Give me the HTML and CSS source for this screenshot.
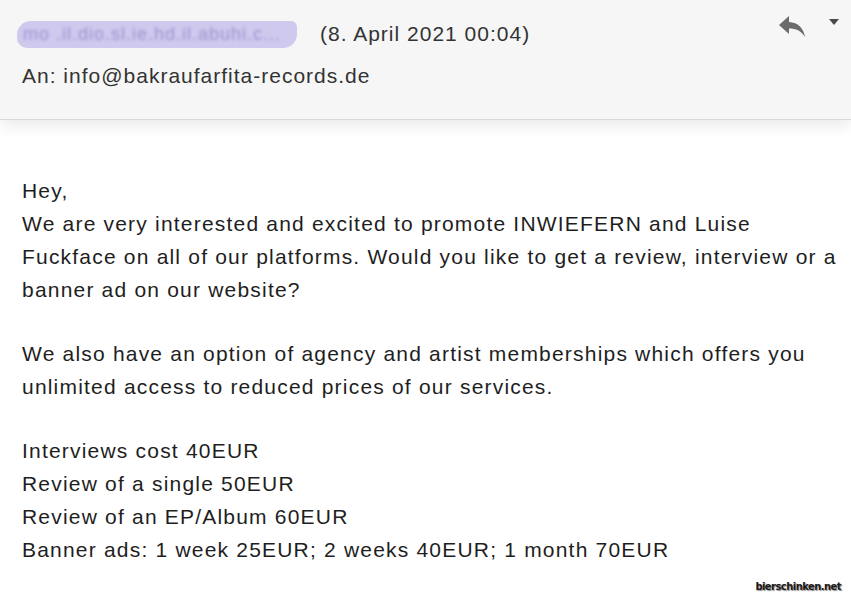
FILE: index.html
```html
<!DOCTYPE html>
<html>
<head>
<meta charset="utf-8">
<link rel="stylesheet" href="styles.css">
</head>
<body>
<header class="mail-head">
  <div class="head-text">
    <div class="from-line"><span class="redact"><span class="redact-text">mo .il.dio.sl.ie.hd.il.abuhi.c...</span></span><span class="date">(8. April 2021 00:04)</span></div>
    <div class="to-line">An: info@bakraufarfita-records.de</div>
  </div>
  <div class="head-actions">
    <svg class="reply" width="30" height="24" viewBox="0 0 30 24"><path d="M11 2 L1 11 L11 20 L11 14.5 C18 14.5 23 16.5 27 23 C25.5 14 20 8.5 11 8 Z" fill="#6b6b6b"/></svg>
    <svg class="caret" width="12" height="8" viewBox="0 0 12 8"><path d="M1 1 L11 1 L6 7 Z" fill="#4a4a4a"/></svg>
  </div>
</header>
<main class="mail-body">
  <p>Hey,<br>We are very interested and excited to promote INWIEFERN and Luise<br>Fuckface on all of our platforms. Would you like to get a review, interview or a<br>banner ad on our website?</p>
  <p>We also have an option of agency and artist memberships which offers you<br>unlimited access to reduced prices of our services.</p>
  <p>Interviews cost 40EUR<br>Review of a single 50EUR<br>Review of an EP/Album 60EUR<br>Banner ads: 1 week 25EUR; 2 weeks 40EUR; 1 month 70EUR</p>
</main>
<div class="watermark">bierschinken.net</div>
</body>
</html>
```

FILE: styles.css
```css
html, body {
  margin: 0;
  padding: 0;
  background: #ffffff;
  font-family: "Liberation Sans", Arial, sans-serif;
  color: #222222;
  width: 851px;
  height: 600px;
  overflow: hidden;
  position: relative;
}
.mail-head {
  height: 120px;
  background: #f6f6f6;
  border-bottom: 1px solid #dadada;
  box-shadow: 0 5px 16px rgba(0,0,0,0.09);
  display: flex;
  justify-content: space-between;
  padding: 0 0 0 22px;
  box-sizing: border-box;
  position: relative;
}
.head-text {
  padding-top: 20px;
  font-size: 21px;
  letter-spacing: 1px;
  color: #333333;
}
.from-line {
  display: flex;
  align-items: center;
  height: 28px;
}
.redact {
  display: inline-block;
  width: 280px;
  height: 27px;
  margin-left: -5px;
  margin-right: 23px;
  background: #d0c9ee;
  border-radius: 14px 6px 14px 10px;
  position: relative;
  overflow: hidden;
}
.redact-text {
  position: absolute;
  left: 6px;
  top: 3px;
  font-size: 18px;
  letter-spacing: 1px;
  color: #9a93cf;
  filter: blur(1.4px);
  white-space: nowrap;
}
.date {
  color: #333333;
}
.to-line {
  margin-top: 16px;
  line-height: 24px;
}
.head-actions {
  display: flex;
  align-items: flex-start;
  gap: 20px;
  padding-top: 12px;
  padding-right: 11px;
}
.reply {
  margin-top: 2px;
}
.caret {
  margin-top: 6px;
}
.mail-body {
  padding: 54px 22px 0 22px;
  font-size: 21px;
  letter-spacing: 1.2px;
  line-height: 33px;
  color: #1e1e1e;
  white-space: nowrap;
}
.mail-body p {
  margin: 0 0 31px 0;
}
.watermark {
  position: absolute;
  right: 10px;
  bottom: 7px;
  font-family: "DejaVu Sans Condensed", "DejaVu Sans", sans-serif;
  font-weight: bold;
  font-size: 11px;
  letter-spacing: -0.5px;
  color: #1a1a1a;
  text-shadow: 1px 1px 1px #888;
}
```
